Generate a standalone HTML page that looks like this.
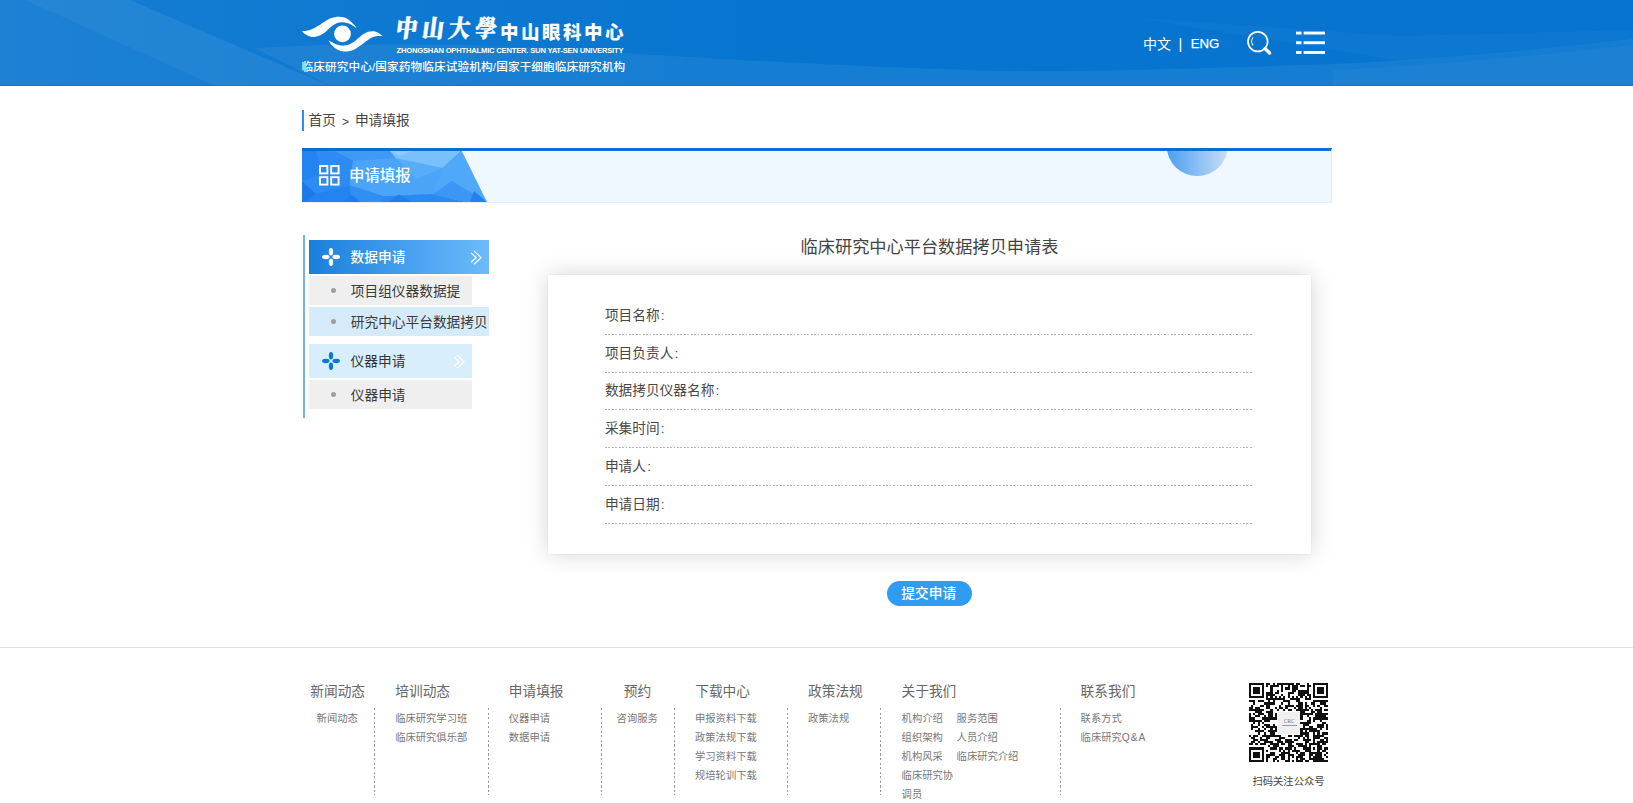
<!DOCTYPE html>
<html lang="zh-CN">
<head>
<meta charset="utf-8">
<title>申请填报 - 中山大学中山眼科中心临床研究中心</title>
<style>
*{margin:0;padding:0;box-sizing:border-box;}
html,body{width:1633px;height:803px;overflow:hidden;background:#fff;}
body{position:relative;font-family:"Liberation Sans","Noto Sans CJK SC",sans-serif;color:#333;-webkit-font-smoothing:antialiased;}
a{color:inherit;text-decoration:none;}
.abs{position:absolute;white-space:nowrap;}

/* ---------- header ---------- */
#hd{position:absolute;left:0;top:0;width:1633px;height:86px;background:#0775d0;overflow:hidden;}
#hd svg.bg{position:absolute;left:0;top:0;}
#logo-eye{position:absolute;left:301px;top:15px;}
#cal{position:absolute;left:395.5px;top:11px;font-family:"Liberation Serif","Noto Serif CJK TC",serif;font-weight:900;font-size:21.5px;line-height:36px;color:#fff;letter-spacing:4.9px;transform:skewX(-7deg) scaleY(1.12);transform-origin:0 50%;-webkit-text-stroke:0.5px #fff;}
#cname{position:absolute;left:500px;top:20px;font-size:18.5px;line-height:26px;font-weight:900;color:#fff;letter-spacing:2.5px;}
#ename{position:absolute;left:396.5px;top:45.6px;font-size:7.6px;line-height:10px;font-weight:bold;color:#fff;letter-spacing:-0.19px;}
#sub{position:absolute;left:301.5px;top:58px;font-size:11.6px;line-height:18px;color:#fff;letter-spacing:0.15px;font-weight:500;}
#lang{position:absolute;left:1143px;top:34px;font-size:14px;line-height:20px;color:#fff;white-space:nowrap;}
#lang i{font-style:normal;position:absolute;left:35.5px;top:-0.5px;font-size:14.5px;}
#lang b{font-weight:normal;position:absolute;left:47.8px;top:-0.3px;font-size:13.2px;-webkit-text-stroke:0.25px #fff;}
#ico-search{position:absolute;left:1245px;top:29px;}
#ico-menu{position:absolute;left:1296px;top:31px;}

/* ---------- breadcrumb ---------- */
#bc{position:absolute;left:302px;top:110px;height:21px;border-left:2px solid #2a90ee;padding-left:4.5px;font-size:13.7px;line-height:22px;color:#444;white-space:nowrap;}
#bc span{font-family:"Liberation Sans",sans-serif;padding:0 6px 0 6px;font-size:12px;position:relative;top:0.5px;}

/* ---------- banner ---------- */
#bn{position:absolute;left:302px;top:147.6px;width:1030px;height:55px;background:#eff7ff;border-top:3px solid #0b6fd0;border-right:1px solid #e3eef9;border-bottom:1px solid #e3eef9;overflow:hidden;}
#bn svg{position:absolute;left:0;top:0;}
#bn .t{position:absolute;left:47px;top:14.6px;font-size:15.4px;line-height:22px;color:#fff;font-weight:500;}

/* ---------- sidebar ---------- */
#sb-line{position:absolute;left:303.2px;top:235px;width:1.8px;height:183px;background:#72b2e8;}
.sh{position:absolute;left:309px;height:34px;font-size:13.7px;line-height:36px;overflow:hidden;padding-left:41.6px;white-space:nowrap;}
.sh svg.f{position:absolute;left:12.7px;top:8.2px;}
.sh svg.a{position:absolute;top:9.5px;}
.si{position:absolute;left:309px;height:29px;font-size:13.7px;line-height:31px;padding-left:41.8px;color:#3a3a3a;white-space:nowrap;overflow:hidden;background:#efefef;width:163px;}
.si:before{content:"";position:absolute;left:22px;top:12px;width:5px;height:5px;border-radius:50%;background:#a09c9c;}

/* ---------- form ---------- */
#ft{position:absolute;left:548px;top:235px;width:763px;text-align:center;font-size:17.2px;line-height:24px;color:#444;}
#panel{position:absolute;left:547.7px;top:275px;width:763px;height:278.8px;background:#fff;box-shadow:0 0 22px rgba(0,0,0,.17),0 0 1px rgba(0,0,0,.12);}
.row{position:absolute;left:57.2px;width:648.6px;height:38px;background:repeating-linear-gradient(to right,#b2b2b2 0,#b2b2b2 1.8px,transparent 1.8px,transparent 3.43px) left bottom/100% 1px no-repeat;font-size:13.7px;line-height:20px;padding-top:9px;color:#484848;}
.row i{font-style:normal;padding-left:1.2px;}
#btn{position:absolute;left:887px;top:580.5px;width:85px;height:25.5px;border-radius:13px;background:#2f9cf4;color:#fff;font-size:13.7px;line-height:26px;text-align:center;font-weight:500;padding-right:1.5px;}

/* ---------- footer ---------- */
#fl{position:absolute;left:0;top:647px;width:1633px;height:1px;background:#e2e2e2;}
.fh{position:absolute;top:682.2px;font-size:13.7px;line-height:20px;color:#666;white-space:nowrap;}
.fa{position:absolute;font-size:10.3px;line-height:14px;color:#777;white-space:nowrap;}
.fd{position:absolute;top:707.7px;width:1px;height:87px;background:repeating-linear-gradient(to bottom,#9a9a9a 0,#9a9a9a 2.2px,transparent 2.2px,transparent 4.55px);}
#qr{position:absolute;left:1249.4px;top:682.6px;}
#qrt{position:absolute;left:1248.5px;top:774.8px;width:80px;text-align:center;font-size:10.3px;line-height:14px;color:#444;white-space:nowrap;}
</style>
</head>
<body>

<!-- HEADER -->
<div id="hd">
  <svg class="bg" width="1633" height="86" viewBox="0 0 1633 86">
    <defs><linearGradient id="hl" x1="0" y1="0" x2="1" y2="0"><stop offset="0" stop-color="#fff" stop-opacity=".06"/><stop offset="1" stop-color="#fff" stop-opacity="0"/></linearGradient></defs>
    <rect x="0" y="0" width="760" height="86" fill="url(#hl)"/>
    <polygon points="0,0 25,0 215,86 0,86" fill="#fff" opacity=".03"/>
    <polygon points="25,0 130,0 330,86 215,86" fill="#fff" opacity=".07"/>
    <path d="M330,86 L255,48 C360,42 470,44 560,49 C700,58 850,67 1000,71 C1100,72 1200,68 1333,64 C1450,58 1550,48 1633,39 L1633,86 Z" fill="#fff" opacity=".06"/>
    <path d="M1137,18 L1400,61 L1633,40 L1633,30 L1400,36 Z" fill="#fff" opacity=".025"/>
    <path d="M1333,70 C1450,64 1550,54 1633,45 L1633,86 L1333,86 Z" fill="#fff" opacity=".035"/>
    <rect x="0" y="85" width="1633" height="1" fill="#0a6cc4" opacity=".5"/>
  </svg>
  <svg id="logo-eye" width="84" height="40" viewBox="0 0 84 40">
    <path d="M0.9,16.2 C0.9,16.2 6.3,15.9 9.0,15.0 C11.6,14.2 14.2,12.6 16.7,11.1 C19.2,9.7 21.6,7.7 23.9,6.4 C26.2,5.0 28.2,3.8 30.5,3.1 C32.8,2.3 35.4,1.7 37.6,1.7 C39.9,1.6 42.2,2.0 44.2,2.8 C46.2,3.5 48.0,5.1 49.6,6.4 C51.2,7.7 52.8,9.4 53.8,10.5 C54.7,11.6 55.3,12.9 55.3,12.9 C55.3,12.9 52.3,10.8 50.8,9.9 C49.3,9.1 47.8,8.3 46.0,7.9 C44.2,7.4 42.0,7.1 40.0,7.3 C38.0,7.5 36.0,8.1 34.1,9.0 C32.2,10.0 30.6,11.4 28.7,12.9 C26.8,14.5 24.7,16.9 22.7,18.3 C20.7,19.7 18.7,20.7 16.7,21.3 C14.7,21.9 12.7,22.2 10.7,21.9 C8.8,21.6 6.4,20.5 4.8,19.5 C3.1,18.6 0.9,16.2 0.9,16.2Z" fill="#fff"/>
    <path d="M27.5,25.2 C27.5,25.2 29.2,28.2 30.5,29.7 C31.8,31.1 33.5,32.8 35.3,33.9 C37.0,34.9 39.1,35.8 41.2,36.2 C43.3,36.6 45.6,36.6 47.8,36.2 C50.0,35.8 52.1,35.0 54.4,33.9 C56.7,32.7 59.2,30.8 61.6,29.1 C63.9,27.4 66.4,25.0 68.7,23.7 C71.0,22.4 73.1,21.7 75.3,21.3 C77.5,20.9 81.9,21.3 81.9,21.3 C81.9,21.3 79.2,18.9 77.7,18.0 C76.2,17.2 74.7,16.4 72.9,16.2 C71.1,16.0 68.9,16.2 66.9,16.8 C64.9,17.5 62.9,18.7 61.0,20.1 C59.0,21.5 56.9,23.7 55.0,25.2 C53.1,26.6 51.5,27.9 49.6,28.8 C47.7,29.7 45.6,30.4 43.6,30.6 C41.6,30.8 39.5,30.4 37.6,30.0 C35.8,29.5 34.0,28.7 32.3,27.9 C30.6,27.1 27.5,25.2 27.5,25.2Z" fill="#fff"/>
    <circle cx="41.5" cy="18.9" r="8.4" fill="#fff"/>
  </svg>
  <div id="cal">中山大學</div>
  <div id="cname">中山眼科中心</div>
  <div id="ename">ZHONGSHAN OPHTHALMIC CENTER. SUN YAT-SEN UNIVERSITY</div>
  <div id="sub">临床研究中心/国家药物临床试验机构/国家干细胞临床研究机构</div>
  <div id="lang">中文<i>|</i><b>ENG</b></div>
  <svg id="ico-search" width="28" height="28" viewBox="0 0 28 28">
    <circle cx="12.8" cy="12.6" r="9.8" fill="none" stroke="#fff" stroke-width="1.7"/>
    <path d="M8.2,8.3 A6,6 0 0 0 8.2,16.3" fill="none" stroke="#fff" stroke-width="1.1"/>
    <path d="M20.2,19.7 L24.6,24" fill="none" stroke="#fff" stroke-width="3.4" stroke-linecap="round"/>
  </svg>
  <svg id="ico-menu" width="30" height="24" viewBox="0 0 30 24">
    <g fill="#fff">
      <rect x="0" y="0.6" width="5.5" height="2.9"/><rect x="7.6" y="0.6" width="21.4" height="2.9"/>
      <rect x="0" y="10.3" width="5.5" height="2.9"/><rect x="7.6" y="10.3" width="21.4" height="2.9"/>
      <rect x="0" y="20" width="5.5" height="2.9"/><rect x="7.6" y="20" width="21.4" height="2.9"/>
    </g>
  </svg>
</div>

<!-- BREADCRUMB -->
<div id="bc">首页<span>&gt;</span>申请填报</div>

<!-- BANNER -->
<div id="bn">
  <svg width="1030" height="52" viewBox="0 0 1030 52">
    <defs>
      <linearGradient id="bg1" x1="0" y1="0" x2="1" y2="0">
        <stop offset="0" stop-color="#2387ee"/><stop offset="1" stop-color="#5db1fb"/>
      </linearGradient>
      <linearGradient id="cg" x1="0" y1="0" x2="1" y2="0">
        <stop offset="0" stop-color="#4a9ff0"/><stop offset="1" stop-color="#c9def6"/>
      </linearGradient>
    </defs>
    <clipPath id="bclip"><polygon points="0,0 159.6,0 185.3,52 0,52"/></clipPath>
    <g clip-path="url(#bclip)">
      <rect x="0" y="0" width="190" height="52" fill="url(#bg1)"/>
      <polygon points="0,0 32.7,0 51,9.8 47.4,34.3 14.3,42.9 0,30.6" fill="#2c8cf3"/>
      <polygon points="0,0 14,0 20,22 0,30.6" fill="#2383f0"/>
      <polygon points="0,30.6 14.3,42.9 0,52" fill="#1b7aea"/>
      <polygon points="14.3,42.9 47.4,34.3 51,52 0,52" fill="#2484ef"/>
      <polygon points="32.7,0 87.8,0 94,7.3 51,9.8" fill="#4099f6"/>
      <polygon points="51,9.8 94,7.3 140.5,17.1 130.7,42.9 81.7,45.3 47.4,34.3" fill="#4ba4f8"/>
      <polygon points="94,7.3 140.5,17.1 115,28" fill="#57adf9"/>
      <polygon points="87.8,0 158.9,0 140.5,17.1 94,7.3" fill="#79c1fd"/>
      <polygon points="87.8,0 110,0 97,5" fill="#8ccbfe"/>
      <polygon points="47.4,34.3 81.7,45.3 79.2,52 51,52" fill="#2f8ff3"/>
      <polygon points="40,52 50,44 60,52" fill="#1d7ce9"/>
      <polygon points="81.7,45.3 130.7,42.9 167.4,52 79.2,52" fill="#2a8af1"/>
      <polygon points="84,52 97,43.5 112,52" fill="#1f80ec"/>
      <polygon points="140.5,17.1 158.9,0 160,0 186,52 167.4,52 130.7,42.9" fill="#50a8f9"/>
      <polygon points="130.7,42.9 150,30 186,52 167.4,52" fill="#3a97f5"/>
      <polygon points="167.4,52 172,40 186,52" fill="#2383ee"/>
    </g>
    <circle cx="895.3" cy="-5.5" r="30.6" fill="url(#cg)"/>
  </svg>
  <svg style="left:17.2px;top:14.2px" width="21" height="21" viewBox="0 0 21 21" fill="none" stroke="#fff" stroke-width="1.9">
    <rect x="1" y="1" width="7.4" height="7.4"/><rect x="12.2" y="1" width="7.4" height="7.4"/>
    <rect x="1" y="12.2" width="7.4" height="7.4"/><rect x="12.2" y="12.2" width="7.4" height="7.4"/>
  </svg>
  <div class="t">申请填报</div>
</div>

<!-- SIDEBAR -->
<div id="sb-line"></div>
<div class="sh" style="top:240px;width:180px;color:#fff;font-weight:500;background:linear-gradient(to right,#1a7fdc,#6cbbfc);">
  <svg class="f" width="18" height="18" viewBox="0 0 18 18" fill="#fff"><ellipse cx="9" cy="3.8" rx="2.15" ry="3.75"/><ellipse cx="9" cy="14.2" rx="2.15" ry="3.75"/><ellipse cx="3.8" cy="9" rx="3.75" ry="2.15"/><ellipse cx="14.2" cy="9" rx="3.75" ry="2.15"/></svg>
  数据申请
  <svg class="a" style="left:161px" width="12" height="15" viewBox="0 0 12 15" fill="none" stroke="#fff" stroke-width="1.15"><path d="M3.97,0.8 L11.1,7.77 L3.97,14.2"/><path d="M1.06,2.9 L6.24,7.77 L1.06,12.3"/></svg>
</div>
<div class="si" style="top:276px;">项目组仪器数据提</div>
<div class="si" style="top:307px;width:180px;background:#d6ebfa;">研究中心平台数据拷贝申请</div>
<div class="sh" style="top:344px;width:163px;color:#333;background:#d8eefd;">
  <svg class="f" width="18" height="18" viewBox="0 0 18 18" fill="#0a78d2"><ellipse cx="9" cy="3.8" rx="2.15" ry="3.75"/><ellipse cx="9" cy="14.2" rx="2.15" ry="3.75"/><ellipse cx="3.8" cy="9" rx="3.75" ry="2.15"/><ellipse cx="14.2" cy="9" rx="3.75" ry="2.15"/></svg>
  仪器申请
  <svg class="a" style="left:144px" width="12" height="15" viewBox="0 0 12 15" fill="none" stroke="#fff" stroke-width="1.15"><path d="M3.97,0.8 L11.1,7.77 L3.97,14.2"/><path d="M1.06,2.9 L6.24,7.77 L1.06,12.3"/></svg>
</div>
<div class="si" style="top:380px;">仪器申请</div>

<!-- FORM -->
<div id="ft">临床研究中心平台数据拷贝申请表</div>
<div id="panel">
  <div class="row" style="top:21.7px;">项目名称<i>:</i></div>
  <div class="row" style="top:59.5px;">项目负责人<i>:</i></div>
  <div class="row" style="top:97.3px;">数据拷贝仪器名称<i>:</i></div>
  <div class="row" style="top:135.1px;">采集时间<i>:</i></div>
  <div class="row" style="top:172.9px;">申请人<i>:</i></div>
  <div class="row" style="top:210.7px;">申请日期<i>:</i></div>
</div>
<div id="btn">提交申请</div>

<!-- FOOTER -->
<div id="fl"></div>
<div class="fh" style="left:310.3px">新闻动态</div>
<a class="fa" style="left:316.6px;top:712.3px">新闻动态</a>
<div class="fd" style="left:374.3px"></div>
<div class="fh" style="left:395.3px">培训动态</div>
<a class="fa" style="left:395.2px;top:712.3px">临床研究学习班</a>
<a class="fa" style="left:395.2px;top:731.1px">临床研究俱乐部</a>
<div class="fd" style="left:487.5px"></div>
<div class="fh" style="left:508.8px">申请填报</div>
<a class="fa" style="left:508.8px;top:712.3px">仪器申请</a>
<a class="fa" style="left:508.8px;top:731.1px">数据申请</a>
<div class="fd" style="left:601px"></div>
<div class="fh" style="left:623.8px">预约</div>
<a class="fa" style="left:616.6px;top:712.3px">咨询服务</a>
<div class="fd" style="left:673.8px"></div>
<div class="fh" style="left:695.2px">下载中心</div>
<a class="fa" style="left:695px;top:712.3px">申报资料下载</a>
<a class="fa" style="left:695px;top:731.1px">政策法规下载</a>
<a class="fa" style="left:695px;top:749.9px">学习资料下载</a>
<a class="fa" style="left:695px;top:768.7px">规培轮训下载</a>
<div class="fd" style="left:787px"></div>
<div class="fh" style="left:808px">政策法规</div>
<a class="fa" style="left:808px;top:712.3px">政策法规</a>
<div class="fd" style="left:880.3px"></div>
<div class="fh" style="left:901.5px">关于我们</div>
<a class="fa" style="left:901.6px;top:712.3px">机构介绍</a>
<a class="fa" style="left:901.6px;top:731.1px">组织架构</a>
<a class="fa" style="left:901.6px;top:749.9px">机构风采</a>
<a class="fa" style="left:901.6px;top:768.7px">临床研究协</a>
<a class="fa" style="left:901.6px;top:787.5px">调员</a>
<a class="fa" style="left:956.6px;top:712.3px">服务范围</a>
<a class="fa" style="left:956.6px;top:731.1px">人员介绍</a>
<a class="fa" style="left:956.6px;top:749.9px">临床研究介绍</a>
<div class="fd" style="left:1060px"></div>
<div class="fh" style="left:1080.6px">联系我们</div>
<a class="fa" style="left:1080.6px;top:712.3px">联系方式</a>
<a class="fa" style="left:1080.6px;top:731.1px">临床研究<span style="letter-spacing:.9px">Q&amp;A</span></a>
<svg id="qr" width="79.2" height="79.6" viewBox="0 0 37 37" shape-rendering="crispEdges"><rect width="37" height="37" fill="#fff"/><path d="M0 0h7v1h-7zM8 0h2v1h-2zM11 0h1v1h-1zM13 0h8v1h-8zM22 0h2v1h-2zM27 0h1v1h-1zM30 0h7v1h-7zM0 1h1v1h-1zM6 1h1v1h-1zM8 1h1v1h-1zM10 1h4v1h-4zM15 1h1v1h-1zM18 1h1v1h-1zM20 1h3v1h-3zM24 1h2v1h-2zM27 1h2v1h-2zM30 1h1v1h-1zM36 1h1v1h-1zM0 2h1v1h-1zM2 2h3v1h-3zM6 2h1v1h-1zM10 2h1v1h-1zM15 2h1v1h-1zM17 2h2v1h-2zM20 2h3v1h-3zM27 2h1v1h-1zM30 2h1v1h-1zM32 2h3v1h-3zM36 2h1v1h-1zM0 3h1v1h-1zM2 3h3v1h-3zM6 3h1v1h-1zM10 3h1v1h-1zM13 3h1v1h-1zM15 3h1v1h-1zM20 3h2v1h-2zM23 3h5v1h-5zM30 3h1v1h-1zM32 3h3v1h-3zM36 3h1v1h-1zM0 4h1v1h-1zM2 4h3v1h-3zM6 4h1v1h-1zM8 4h3v1h-3zM12 4h2v1h-2zM18 4h3v1h-3zM23 4h5v1h-5zM30 4h1v1h-1zM32 4h3v1h-3zM36 4h1v1h-1zM0 5h1v1h-1zM6 5h1v1h-1zM8 5h4v1h-4zM15 5h1v1h-1zM18 5h1v1h-1zM23 5h3v1h-3zM27 5h2v1h-2zM30 5h1v1h-1zM36 5h1v1h-1zM0 6h7v1h-7zM8 6h1v1h-1zM10 6h1v1h-1zM12 6h1v1h-1zM14 6h1v1h-1zM16 6h1v1h-1zM18 6h1v1h-1zM20 6h1v1h-1zM22 6h1v1h-1zM24 6h1v1h-1zM26 6h1v1h-1zM28 6h1v1h-1zM30 6h7v1h-7zM8 7h9v1h-9zM19 7h5v1h-5zM26 7h3v1h-3zM0 8h3v1h-3zM4 8h3v1h-3zM9 8h1v1h-1zM11 8h1v1h-1zM16 8h3v1h-3zM22 8h2v1h-2zM30 8h7v1h-7zM2 9h1v1h-1zM7 9h5v1h-5zM15 9h1v1h-1zM18 9h1v1h-1zM23 9h2v1h-2zM26 9h1v1h-1zM29 9h2v1h-2zM33 9h3v1h-3zM1 10h1v1h-1zM5 10h2v1h-2zM8 10h2v1h-2zM14 10h1v1h-1zM17 10h4v1h-4zM22 10h3v1h-3zM26 10h2v1h-2zM30 10h1v1h-1zM32 10h1v1h-1zM35 10h2v1h-2zM0 11h2v1h-2zM3 11h2v1h-2zM8 11h2v1h-2zM12 11h1v1h-1zM14 11h2v1h-2zM17 11h1v1h-1zM21 11h1v1h-1zM23 11h2v1h-2zM26 11h1v1h-1zM28 11h1v1h-1zM33 11h1v1h-1zM0 12h7v1h-7zM10 12h1v1h-1zM13 12h1v1h-1zM16 12h1v1h-1zM18 12h2v1h-2zM22 12h6v1h-6zM29 12h1v1h-1zM31 12h3v1h-3zM35 12h2v1h-2zM3 13h3v1h-3zM8 13h3v1h-3zM24 13h2v1h-2zM29 13h2v1h-2zM32 13h2v1h-2zM0 14h1v1h-1zM2 14h1v1h-1zM4 14h3v1h-3zM9 14h2v1h-2zM12 14h1v1h-1zM24 14h6v1h-6zM31 14h6v1h-6zM0 15h1v1h-1zM3 15h2v1h-2zM7 15h1v1h-1zM9 15h2v1h-2zM12 15h1v1h-1zM24 15h1v1h-1zM27 15h1v1h-1zM31 15h5v1h-5zM0 16h3v1h-3zM6 16h7v1h-7zM24 16h1v1h-1zM28 16h1v1h-1zM30 16h7v1h-7zM0 17h6v1h-6zM7 17h3v1h-3zM27 17h2v1h-2zM30 17h1v1h-1zM33 17h1v1h-1zM2 18h1v1h-1zM4 18h1v1h-1zM6 18h1v1h-1zM24 18h5v1h-5zM34 18h2v1h-2zM1 19h1v1h-1zM4 19h1v1h-1zM7 19h3v1h-3zM11 19h1v1h-1zM25 19h3v1h-3zM32 19h3v1h-3zM36 19h1v1h-1zM1 20h3v1h-3zM6 20h1v1h-1zM8 20h5v1h-5zM25 20h1v1h-1zM28 20h2v1h-2zM32 20h3v1h-3zM36 20h1v1h-1zM1 21h1v1h-1zM4 21h1v1h-1zM7 21h1v1h-1zM10 21h1v1h-1zM12 21h1v1h-1zM24 21h8v1h-8zM33 21h1v1h-1zM36 21h1v1h-1zM3 22h4v1h-4zM9 22h4v1h-4zM24 22h1v1h-1zM26 22h1v1h-1zM28 22h5v1h-5zM4 23h1v1h-1zM7 23h1v1h-1zM10 23h2v1h-2zM24 23h4v1h-4zM30 23h1v1h-1zM32 23h1v1h-1zM34 23h3v1h-3zM0 24h1v1h-1zM2 24h2v1h-2zM6 24h9v1h-9zM18 24h2v1h-2zM21 24h4v1h-4zM26 24h2v1h-2zM30 24h5v1h-5zM1 25h2v1h-2zM5 25h1v1h-1zM8 25h2v1h-2zM14 25h3v1h-3zM23 25h1v1h-1zM25 25h1v1h-1zM27 25h1v1h-1zM30 25h3v1h-3zM35 25h2v1h-2zM2 26h2v1h-2zM5 26h4v1h-4zM12 26h3v1h-3zM17 26h3v1h-3zM21 26h2v1h-2zM25 26h4v1h-4zM30 26h1v1h-1zM33 26h2v1h-2zM36 26h1v1h-1zM1 27h2v1h-2zM4 27h1v1h-1zM7 27h4v1h-4zM13 27h3v1h-3zM17 27h4v1h-4zM26 27h2v1h-2zM30 27h1v1h-1zM32 27h5v1h-5zM0 28h2v1h-2zM3 28h1v1h-1zM5 28h3v1h-3zM10 28h4v1h-4zM15 28h2v1h-2zM18 28h2v1h-2zM22 28h3v1h-3zM26 28h1v1h-1zM28 28h5v1h-5zM34 28h2v1h-2zM9 29h1v1h-1zM11 29h3v1h-3zM18 29h3v1h-3zM23 29h4v1h-4zM28 29h1v1h-1zM32 29h2v1h-2zM0 30h7v1h-7zM10 30h3v1h-3zM14 30h2v1h-2zM17 30h3v1h-3zM21 30h1v1h-1zM25 30h4v1h-4zM30 30h1v1h-1zM32 30h2v1h-2zM35 30h2v1h-2zM0 31h1v1h-1zM6 31h1v1h-1zM8 31h1v1h-1zM14 31h1v1h-1zM16 31h1v1h-1zM18 31h1v1h-1zM20 31h4v1h-4zM26 31h3v1h-3zM32 31h1v1h-1zM34 31h2v1h-2zM0 32h1v1h-1zM2 32h3v1h-3zM6 32h1v1h-1zM10 32h2v1h-2zM15 32h4v1h-4zM22 32h1v1h-1zM24 32h2v1h-2zM28 32h6v1h-6zM36 32h1v1h-1zM0 33h1v1h-1zM2 33h3v1h-3zM6 33h1v1h-1zM8 33h4v1h-4zM14 33h3v1h-3zM18 33h3v1h-3zM23 33h3v1h-3zM28 33h2v1h-2zM31 33h3v1h-3zM35 33h1v1h-1zM0 34h1v1h-1zM2 34h3v1h-3zM6 34h1v1h-1zM8 34h2v1h-2zM12 34h2v1h-2zM15 34h2v1h-2zM18 34h1v1h-1zM20 34h1v1h-1zM22 34h3v1h-3zM28 34h1v1h-1zM30 34h4v1h-4zM36 34h1v1h-1zM0 35h1v1h-1zM6 35h1v1h-1zM8 35h1v1h-1zM11 35h2v1h-2zM15 35h2v1h-2zM18 35h1v1h-1zM22 35h1v1h-1zM24 35h2v1h-2zM28 35h7v1h-7zM0 36h7v1h-7zM8 36h1v1h-1zM11 36h1v1h-1zM13 36h1v1h-1zM17 36h2v1h-2zM20 36h1v1h-1zM22 36h3v1h-3zM26 36h2v1h-2zM30 36h7v1h-7z" fill="#111"/><rect x="13.6" y="13.4" width="10.4" height="10.2" fill="#f0f0f0"/><text x="18.8" y="18.6" font-size="2.6" text-anchor="middle" fill="#778" font-family="Liberation Serif,serif">CRC</text><rect x="15.2" y="19.6" width="7.2" height="0.35" fill="#99a"/><rect x="15.8" y="20.8" width="6" height="0.3" fill="#aab"/></svg>
<div id="qrt">扫码关注公众号</div>

</body>
</html>
